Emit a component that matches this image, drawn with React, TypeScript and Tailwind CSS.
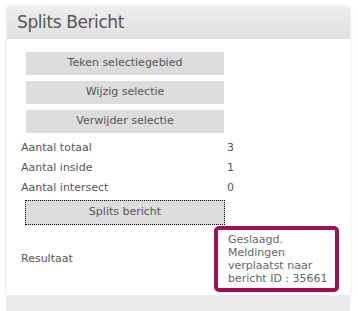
import React from 'react';

const font = { fontFamily: '"DejaVu Sans", Verdana, sans-serif' };

function GrayButton({ label }: { label: string }) {
  return (
    <button
      type="button"
      className="block h-[23px] w-[198px] bg-[#dcdcdc] text-[11px] text-[#555]"
    >
      {label}
    </button>
  );
}

function CountRow({ label, value }: { label: string; value: string }) {
  return (
    <div className="flex h-[20px] items-center text-[11px] text-[#555]">
      <span className="w-[206px]">{label}</span>
      <span>{value}</span>
    </div>
  );
}

export default function App() {
  return (
    <div className="h-[311px] w-[358px] overflow-hidden bg-white pt-[7px]" style={font}>
      <div className="ml-[7px] w-[343px] shadow-[0_0_4px_rgba(0,0,0,0.12)]">
        {/* Header */}
        <div className="flex h-[32px] items-center bg-gradient-to-b from-[#ededed] to-[#e0e0e0] pl-[10px] text-[17px] tracking-[-0.4px] text-[#555]">
          Splits Bericht
        </div>

        {/* Body */}
        <div className="h-[256px] bg-white pl-[14px] pt-[13px]">
          <div className="ml-[5px] flex flex-col gap-[6px]">
            <GrayButton label="Teken selectiegebied" />
            <GrayButton label="Wijzig selectie" />
            <GrayButton label="Verwijder selectie" />
          </div>

          <div className="mt-[5px]">
            <CountRow label="Aantal totaal" value="3" />
            <CountRow label="Aantal inside" value="1" />
            <CountRow label="Aantal intersect" value="0" />
          </div>

          <button
            type="button"
            className="ml-[4px] mt-[2px] block h-[25px] w-[200px] border border-dotted border-black bg-[#dcdcdc] text-[11px] text-[#555]"
          >
            Splits bericht
          </button>

          <div className="mt-[1px] flex items-center">
            <span className="w-[193px] text-[11px] text-[#555]">Resultaat</span>
            <div className="w-[125px] rounded-[5px] border-[4px] border-[#9c0f50] py-[3px] pl-[10px] text-[11px] leading-[13px] text-[#666]">
              Geslaagd.
              <br />
              Meldingen
              <br />
              verplaatst naar
              <br />
              bericht ID : 35661
            </div>
          </div>
        </div>
      </div>
      <div className="ml-[6px] h-[20px] w-[344px] bg-[#ebebeb]" />
    </div>
  );
}
